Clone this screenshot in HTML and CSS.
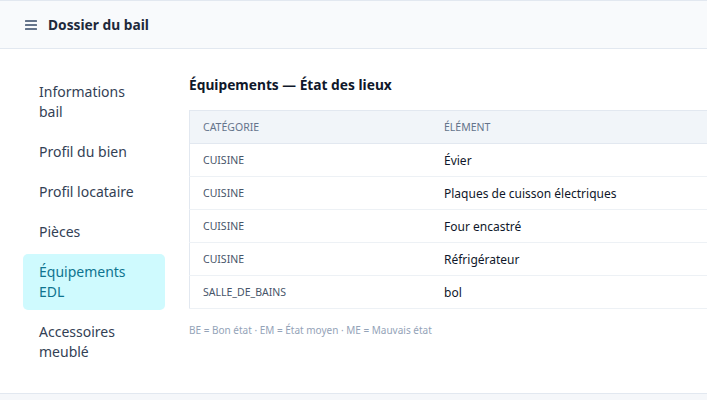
FILE: index.html
```html
<!DOCTYPE html>
<html lang="fr">
<head>
<meta charset="UTF-8" />
<meta name="viewport" content="width=device-width, initial-scale=1.0">
<title>Dossier du bail</title>
<link rel="stylesheet" href="styles.css">
</head>
<body>

  <div class="card">
    <header class="card-header">
      <svg class="menu-icon" width="12" height="10" viewBox="0 0 12 10" aria-hidden="true">
        <rect x="0" y="0" width="12" height="2" rx="0.5" />
        <rect x="0" y="4" width="12" height="2" rx="0.5" />
        <rect x="0" y="8" width="12" height="2" rx="0.5" />
      </svg>
      <span class="card-title">Dossier du bail</span>
    </header>

    <div class="card-body">
      <nav class="side-nav">
        <a class="nav-item" href="#">Informations bail</a>
        <a class="nav-item" href="#">Profil du bien</a>
        <a class="nav-item" href="#">Profil locataire</a>
        <a class="nav-item" href="#">Pièces</a>
        <a class="nav-item active" href="#">Équipements EDL</a>
        <a class="nav-item" href="#">Accessoires meublé</a>
      </nav>

      <section class="content">
        <h2>Équipements — État des lieux</h2>

        <table class="equip-table">
          <thead>
            <tr>
              <th class="col-cat">Catégorie</th>
              <th class="col-item">Élément</th>
              <th></th>
            </tr>
          </thead>
          <tbody>
            <tr><td class="cat">CUISINE</td><td>Évier</td><td></td></tr>
            <tr><td class="cat">CUISINE</td><td>Plaques de cuisson électriques</td><td></td></tr>
            <tr><td class="cat">CUISINE</td><td>Four encastré</td><td></td></tr>
            <tr><td class="cat">CUISINE</td><td>Réfrigérateur</td><td></td></tr>
            <tr><td class="cat">SALLE_DE_BAINS</td><td>bol</td><td></td></tr>
          </tbody>
        </table>

        <p class="legend">BE = Bon état · EM = État moyen · ME = Mauvais état</p>
      </section>
    </div>
  </div>

</body>
</html>
```

FILE: styles.css
```css
body {
  margin: 0;
  background-color: #f5f7fa;
  font-family: "Noto Sans", "Open Sans", sans-serif;
  color: #1e293b;
  overflow: hidden;
}

.card {
  width: 1000px;
  margin-left: -1px;
  background-color: #ffffff;
  border: 1px solid #e2e8f0;
}

.card-header {
  height: 47px;
  display: flex;
  align-items: center;
  gap: 11px;
  padding-left: 25px;
  background-color: #f8fafc;
  border-bottom: 1px solid #e2e8f0;
}

.menu-icon {
  fill: #64748b;
}

.card-title {
  font-size: 13.75px;
  font-weight: bold;
  color: #1e293b;
}

.card-body {
  display: flex;
  gap: 24px;
  padding: 25px 23px 23px;
}

.side-nav {
  width: 142px;
  flex-shrink: 0;
  display: flex;
  flex-direction: column;
  gap: 4px;
}

.nav-item {
  display: block;
  padding: 8px 16px;
  font-size: 14px;
  line-height: 20px;
  color: #334155;
  text-decoration: none;
  border-radius: 5px;
}

.nav-item.active {
  background-color: #cffafe;
  color: #0e7490;
}

.content {
  flex: 1;
}

.content h2 {
  margin: 0 0 14px;
  font-size: 13.75px;
  line-height: 22px;
  font-weight: bold;
  color: #0f172a;
}

.equip-table {
  width: 760px;
  border-collapse: collapse;
  border: 1px solid #e2e8f0;
}

.equip-table th,
.equip-table td {
  text-align: left;
  padding: 0 13px;
  height: 32px;
  border-bottom: 1px solid #edf1f5;
}

.equip-table th {
  background-color: #f1f5f9;
  border-bottom: 1px solid #e2e8f0;
  font-size: 10.5px;
  font-weight: normal;
  text-transform: uppercase;
  color: #64748b;
}

.col-cat {
  width: 215px;
}

.col-item {
  width: 280px;
}

.equip-table td {
  font-size: 12px;
  color: #0f172a;
}

.equip-table td.cat {
  font-size: 10.5px;
  color: #475569;
}

.legend {
  margin: 14px 0 0;
  font-size: 10px;
  color: #94a3b8;
}
```
